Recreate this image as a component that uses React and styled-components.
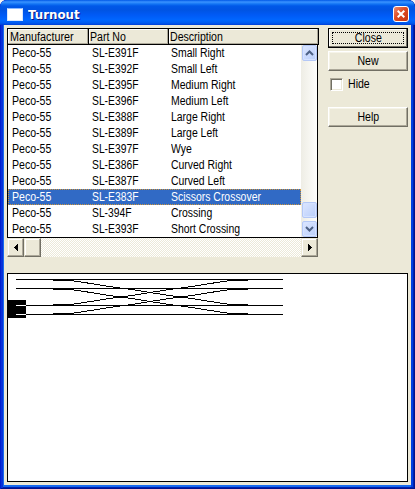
import React from 'react';
import styled, { createGlobalStyle } from 'styled-components';

const Global = createGlobalStyle`
  *{box-sizing:border-box}
  body{margin:0;background:#f4f4f0;overflow:hidden;font:12px/16px "Liberation Sans",Arial,sans-serif;color:#000}
  button{font:inherit;color:inherit;border-radius:0;margin:0;padding:0}
`;
const Frame = styled.main`
  width:415px;height:489px;padding:0 4px 4px;display:flex;flex-direction:column;
  border-radius:7px 7px 0 0;overflow:hidden;background:#0831d9;
  box-shadow:inset 1px 0 #001ed0,inset -1px 0 #00138c,inset 0 -1px #00138c,inset 3px 0 #0831d9,inset -2px 0 #0020b0,inset 0 -2px #0020b0,inset -4px 0 #0040e0,inset 4px -4px #166aee;
`;
const TitleBar = styled.header`
  height:25px;margin:0 -4px;padding:0 6px 0 7px;display:flex;align-items:center;flex:none;
  background:linear-gradient(#0058e6 0,#3a93ff 2px,#1274f4 4px,#0058e8 6px,#0054e3 10px,#005af5 15px,#0066ff 20px,#005bf0 23px,#003dd7 25px);
`;
const AppIcon = styled.span`
  width:16px;height:13px;margin-top:4px;background:#fff;border:1px solid #d9e8ff;border-top-color:#8dbaff;flex:none;
`;
const Title = styled.h1`
  margin:4px auto 0 5px;font:bold 13px/18px "DejaVu Sans",sans-serif;color:#fff;text-shadow:1px 1px #0a1883;
  width:60px;transform:scaleX(.91);transform-origin:left;white-space:nowrap;
`;
const CloseBox = styled.button`
  width:16px;height:16px;margin-top:3px;border:1px solid #fff;border-radius:3px;display:grid;place-items:center;
  background:linear-gradient(135deg,#eb8b70,#dd4b25 45%,#c43412);
  svg{display:block}
`;
const Client = styled.section`
  height:460px;background:#ece9d8;padding:3px 3px 3px;display:flex;flex-direction:column;gap:16px;
`;
const Top = styled.div`display:flex;height:229px;align-items:flex-start;`;
const ListPane = styled.div`width:312px;flex:none;`;
const Header = styled.div`
  height:17px;display:grid;grid-template-columns:81px 80px 149px;border:1px solid #000;background:#000;
`;
const HeadCell = styled.div`
  height:15px;padding-left:${p => p.$pad}px;line-height:16px;background:#ece9d8;
  margin-right:${p => (p.$last ? 0 : 1)}px;
  box-shadow:inset -1px -1px #aca899,inset 1px 1px #fff;
`;
const Label = styled.span`
  display:inline-block;transform:scaleX(${p => p.$scale || 0.88});transform-origin:${p => p.$origin || 'left'};white-space:nowrap;
`;
const ListBody = styled.div`
  width:311px;height:193px;display:flex;background:#fff;border:solid #000;border-width:0 1px 1px;
`;
const Rows = styled.div`width:293px;height:192px;flex:none;`;
const Row = styled.div`
  height:16px;display:grid;grid-template-columns:79.5px 79.5px 1fr;padding-left:4px;line-height:16px;
  color:${p => (p.$selected ? '#fff' : '#000')};
  background:${p => (p.$selected ? '#316ac5' : '#fff')};
  outline:${p => (p.$selected ? '1px dotted #ce953a' : '0')};outline-offset:-1px;
`;
const VBar = styled.div`
  width:16px;height:192px;display:flex;flex-direction:column;background:linear-gradient(90deg,#eeede5,#fefefb);
`;
const VButton = styled.div`
  width:15px;height:16px;margin-left:1px;flex:none;display:grid;place-items:center;
  border:1px solid #b4c8f6;border-radius:2px;background:linear-gradient(135deg,#dce6ff,#b9cefa);
  box-shadow:inset 0 0 0 1px #d5e2ff;
  margin-top:${p => p.$offset || 0}px;
  svg{display:block}
`;
const HBar = styled.div`
  width:311px;height:19px;display:flex;
  background:repeating-conic-gradient(#fff 0 25%,#ece9d8 0 50%) 0 0/2px 2px;
`;
const HButton = styled.div`
  width:${p => p.$w}px;height:19px;margin-left:${p => (p.$end ? 'auto' : 0)};display:grid;place-items:center;background:#ece9d8;
  border:1px solid;border-color:#ece9d8 #716f64 #716f64 #ece9d8;box-shadow:inset -1px -1px #aca899,inset 1px 1px #fff;
  svg{display:block}
`;
const Actions = styled.div`margin-left:9px;width:80px;display:flex;flex-direction:column;`;
const Action = styled.button`
  width:80px;height:20px;text-align:center;line-height:17px;background:#ece9d8;margin-bottom:${p => p.$gap || 0}px;
  border:1px solid;border-color:${p => (p.$default ? '#000' : '#fff #716f64 #716f64 #fff')};
  box-shadow:inset -1px -1px ${p => (p.$default ? '#716f64' : '#aca899')},inset 1px 1px ${p => (p.$default ? '#fff' : '#f6f4e9')};
  outline:${p => (p.$default ? '1px dotted #000' : '0')};outline-offset:-5px;
`;
const Hide = styled.label`display:flex;align-items:center;height:13px;margin:0 0 16px 2px;gap:5px;position:static;`;
const Check = styled.input`
  appearance:none;width:13px;height:13px;margin:0;background:#fff;border:1px solid;
  border-color:#aca899 #fff #fff #aca899;box-shadow:inset 1px 1px #716f64,inset -1px -1px #ece9d8;
`;
const HideText = styled(Label)`margin-top:-2px;`;
const Preview = styled.div`
  width:401px;height:209px;border:1px solid #000;background:#fff;
  svg{display:block}
`;

const parts = [
  ['SL-E391F', 'Small Right'], ['SL-E392F', 'Small Left'], ['SL-E395F', 'Medium Right'],
  ['SL-E396F', 'Medium Left'], ['SL-E388F', 'Large Right'], ['SL-E389F', 'Large Left'],
  ['SL-E397F', 'Wye'], ['SL-E386F', 'Curved Right'], ['SL-E387F', 'Curved Left'],
  ['SL-E383F', 'Scissors Crossover'], ['SL-394F', 'Crossing'], ['SL-E393F', 'Short Crossing'],
];

const Chevron = ({ down }) => (
  <svg width="9" height="6" viewBox="0 0 9 6">
    <path d={down ? 'M1 1l3.5 3.5L8 1' : 'M1 5l3.5-3.5L8 5'} fill="none" stroke="#4d6185" strokeWidth="2" />
  </svg>
);
const Arrow = ({ right }) => (
  <svg width="4" height="7" shapeRendering="crispEdges">
    <path d={right ? 'M0 0v7l4-3.5z' : 'M4 0v7L0 3.5z'} />
  </svg>
);

const shape = [[53, 280], [71, 280], [83, 281.8], [97, 284], [108, 285.8], [120, 287.5], [132, 289], [140, 290.3], [150, 292]];
const curve = [...shape, ...shape.slice(0, -1).reverse().map(([x, y]) => [301 - x, 584 - y])];
const path = (flip, dy) => 'M' + curve.map(([x, y]) => `${x} ${(flip ? 584 - y : y) + dy + 0.5}`).join('L');

const Track = () => (
  <svg width="399" height="207" viewBox="8 274 399 207" shapeRendering="crispEdges">
    <path d="M8 300h18v18H8z" />
    <path d="M16 279.5h267M16 288.5h267M16 305.5h267M16 314.5h267" stroke="#000" />
    <path d="M16 305.5h10M16 314.5h10" stroke="#fff" />
    {[[false, 0], [false, 9], [true, 0], [true, 9]].map(([flip, dy]) => (
      <path key={`${flip}${dy}`} d={path(flip, dy)} fill="none" stroke="#000" />
    ))}
  </svg>
);

export default function App() {
  return (
    <>
      <Global />
      <Frame>
        <TitleBar>
          <AppIcon />
          <Title>Turnout</Title>
          <CloseBox aria-label="Close window">
            <svg width="8" height="8" viewBox="0 0 8 8"><path d="M.7.7l6.6 6.6M7.3.7L.7 7.3" stroke="#fff" strokeWidth="2" /></svg>
          </CloseBox>
        </TitleBar>
        <Client>
          <Top>
            <ListPane>
              <Header>
                <HeadCell $pad={2}><Label $scale={0.9}>Manufacturer</Label></HeadCell>
                <HeadCell $pad={1}><Label>Part No</Label></HeadCell>
                <HeadCell $pad={1} $last><Label>Description</Label></HeadCell>
              </Header>
              <ListBody>
                <Rows>
                  {parts.map(([no, name]) => (
                    <Row key={no} $selected={no === 'SL-E383F'}>
                      <Label>Peco-55</Label>
                      <Label $scale={0.86}>{no}</Label>
                      <Label $scale={0.87}>{name}</Label>
                    </Row>
                  ))}
                </Rows>
                <VBar>
                  <VButton><Chevron /></VButton>
                  <VButton $offset={141} />
                  <VButton $offset={3}><Chevron down /></VButton>
                </VBar>
              </ListBody>
              <HBar>
                <HButton $w={17}><Arrow /></HButton>
                <HButton $w={17} />
                <HButton $w={17} $end><Arrow right /></HButton>
              </HBar>
            </ListPane>
            <Actions>
              <Action $default $gap={3}><Label $origin="center">Close</Label></Action>
              <Action $gap={7}><Label $origin="center">New</Label></Action>
              <Hide><Check type="checkbox" /><HideText>Hide</HideText></Hide>
              <Action><Label $origin="center">Help</Label></Action>
            </Actions>
          </Top>
          <Preview><Track /></Preview>
        </Client>
      </Frame>
    </>
  );
}
